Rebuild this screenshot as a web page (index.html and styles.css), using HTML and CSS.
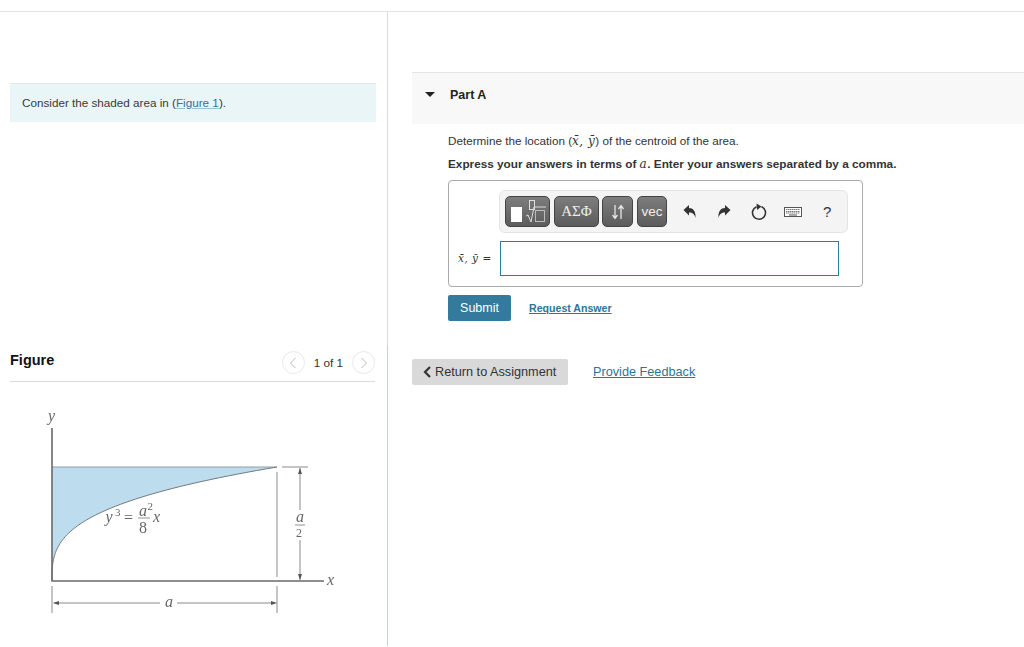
FILE: index.html
```html
<!DOCTYPE html>
<html lang="en">
<head>
<meta charset="utf-8">
<title>Part A</title>
<link rel="stylesheet" href="styles.css">
</head>
<body>
<div class="page">
  <section class="left">
    <div class="intro">Consider the shaded area in (<a href="#" class="figlink">Figure 1</a>).</div>
    <div class="fig-head">
      <h2 class="fig-title">Figure</h2>
      <div class="pager">
        <span class="pager-btn"><svg width="8" height="12" viewBox="0 0 8 12"><path d="M6.5 1 L1.5 6 L6.5 11" fill="none" stroke="#bbb" stroke-width="1"/></svg></span>
        <span class="pager-text">1 of 1</span>
        <span class="pager-btn"><svg width="8" height="12" viewBox="0 0 8 12"><path d="M1.5 1 L6.5 6 L1.5 11" fill="none" stroke="#bbb" stroke-width="1"/></svg></span>
      </div>
    </div>
    <svg class="figure" width="350" height="230" viewBox="0 400 350 230">
      <path d="M52 467 H277 C52 505 52 543 52 581 Z" fill="#bddcee"/>
      <path d="M52 467 H277" stroke="#8f9ea6" stroke-width="1" fill="none"/>
      <path d="M277 467 C52 505 52 543 52 581" stroke="#6f7a80" stroke-width="1" fill="none"/>
      <path d="M52 428 V581 H324" stroke="#6a6a6a" stroke-width="1.6" fill="none"/>
      <path d="M277 472 V577 M282 467 H308 M300 468 V510 M300 540 V580 M52 586 V613 M277 586 V613 M54 603 H160 M177 603 H275" stroke="#8a8a8a" stroke-width="1" fill="none"/>
      <path d="M300 468 l-2 6 h4 Z M300 580 l-2 -6 h4 Z M53 603 l6 -2 v4 Z M277 603 l-6 -2 v4 Z" fill="#555"/>
      <g class="fig-text">
        <text x="48" y="421" class="it big">y</text>
        <text x="327" y="585" class="it big">x</text>
        <text x="165" y="607" class="it big">a</text>
        <text x="105.500" y="522" class="it big">y</text>
        <text x="115" y="516" class="up small">3</text>
        <text x="124" y="523" class="up big">=</text>
        <text x="139" y="516" class="it big">a</text>
        <text x="147.500" y="510" class="up small">2</text>
        <text x="139" y="533" class="up big">8</text>
        <text x="153" y="522" class="it big">x</text>
        <text x="296" y="522" class="it big">a</text>
        <text x="296" y="537" class="up small2">2</text>
      </g>
      <path d="M138 518 H150 M295 525 H305" stroke="#777" stroke-width="0.8"/>
    </svg>
  </section>
  <section class="right">
    <header class="part-head">
      <svg class="caret" width="10" height="5" viewBox="0 0 10 5"><path d="M0 0 H10 L5 5 Z" fill="#222"/></svg>
      <h2 class="part-title">Part A</h2>
    </header>
    <div class="part-body">
      <p class="q">Determine the location (<span class="m">x̄, ȳ</span>) of the centroid of the area.</p>
      <p class="q strong">Express your answers in terms of <span class="m">a</span>. Enter your answers separated by a comma.</p>
      <div class="answer">
        <div class="toolbar">
          <div class="tools-main">
            <span class="tool t1"><svg width="38" height="26" viewBox="0 0 38 26"><rect x="2" y="8" width="11" height="15" fill="#fff"/><rect x="20.500" y="1.500" width="5" height="9" fill="none" stroke="#ddd"/><path d="M17 17 l2 -1 l3 7 l3 -15 h12" fill="none" stroke="#ddd" stroke-width="1"/><rect x="26.500" y="11.500" width="9" height="11" fill="none" stroke="#bbb"/></svg></span>
            <span class="tool t2">ΑΣΦ</span>
            <span class="tool t3"><svg width="16" height="16" viewBox="0 0 16 16"><path d="M5 1 V14 M2.500 11 L5 14.500 L7.500 11 M11 15 V2 M8.500 5 L11 1.500 L13.500 5" fill="none" stroke="#e6e6e6" stroke-width="1.300"/></svg></span>
            <span class="tool t4">vec</span>
          </div>
          <div class="tools-aux">
            <svg class="aux" width="14" height="16" viewBox="0 0 14 16"><path d="M0.500 6 L6 1 V4 C10 4 13 7 12.500 14 C11.500 10 9.500 8.500 6 8.500 V11.500 Z" fill="#333"/></svg>
            <svg class="aux" width="14" height="16" viewBox="0 0 14 16"><path d="M13.500 6 L8 1 V4 C4 4 1 7 1.500 14 C2.500 10 4.500 8.500 8 8.500 V11.500 Z" fill="#333"/></svg>
            <svg class="aux" width="18" height="18" viewBox="0 0 18 18"><path d="M6.500 3.700 A6.500 6.500 0 1 0 11.500 3.700" fill="none" stroke="#333" stroke-width="1.600"/><path d="M6.500 0.500 L11.500 3.500 L7 7 Z" fill="#333"/></svg>
            <svg class="aux" width="18" height="10" viewBox="0 0 18 10"><rect x="0.500" y="0.500" width="17" height="9" fill="#fff" stroke="#555"/><path d="M2 2.500 H16 M2 4.500 H16 M2 6 H16" stroke="#777" stroke-dasharray="1.500 0.500"/><path d="M5 8 H13" stroke="#555"/></svg>
            <span class="help">?</span>
          </div>
        </div>
        <div class="answer-row">
          <label class="ans-label m">x̄, ȳ <span class="eq">=</span></label>
          <div class="ans-input"></div>
        </div>
      </div>
      <div class="actions">
        <button class="submit" type="button">Submit</button>
        <a href="#" class="req">Request Answer</a>
      </div>
    </div>
    <div class="footer-row">
      <button class="back" type="button"><svg width="9" height="12" viewBox="0 0 9 12"><path d="M7 1 L2 6 L7 11" fill="none" stroke="#333" stroke-width="2.200"/></svg>Return to Assignment</button>
      <a href="#" class="feedback">Provide Feedback</a>
    </div>
  </section>
</div>
</body>
</html>
```
FILE: styles.css
```css
* { box-sizing: border-box; }
html, body { margin: 0; padding: 0; background: #fff; }
body { font-family: "Liberation Sans", Arial, sans-serif; color: #333; overflow: hidden; }
.page { margin-top: 11px; border-top: 1px solid #e2e4e8; display: flex; height: 635px; }
.left { width: 388px; flex: none; border-right: 1px solid #d5dae0; border-image: linear-gradient(#d8dce2 0 334px, #c4cfe0 334px) 1; padding: 71px 12px 0 10px; }
.intro { height: 39px; margin-right: -1px; background: #e9f5f7; border-top: 1px solid #dfe8ea; padding-left: 12px; font-size: 11.700px; line-height: 38px; color: #3a3a3a; }
.figlink { color: #2b7696; text-decoration: underline; text-decoration-color: #9cc0d0; }
.fig-head { margin-top: 226px; height: 34px; border-bottom: 1px solid #d8dce0; display: flex; justify-content: space-between; align-items: flex-start; }
.fig-title { margin: 3px 0 0; font-size: 14.500px; line-height: 19px; font-weight: 700; color: #111; }
.pager { display: flex; align-items: center; gap: 9px; margin-top: 3px; }
.pager-btn { width: 23px; height: 23px; border: 1px solid #e8e8e8; border-radius: 50%; display: flex; align-items: center; justify-content: center; }
.pager-text { font-size: 11.700px; color: #333; }
.figure { display: block; margin: 18px 0 0 -10px; filter: blur(0.3px); }
.fig-text { fill: #666; font-family: "Liberation Serif", serif; }
.it { font-style: italic; }
.big { font-size: 16px; }
.small { font-size: 11px; }
.small2 { font-size: 12px; }
.right { flex: 1; min-width: 0; padding: 60px 0 0 24px; }
.part-head { height: 52px; background: #f8f8f8; border-top: 1px solid #e4e4e4; display: flex; align-items: flex-start; padding: 19px 0 0 13px; }
.caret { flex: none; }
.part-title { margin: -5px 0 0 15px; font-size: 12.500px; line-height: 16px; font-weight: 700; color: #222; }
.part-body { padding: 9px 0 0 36px; }
.q { margin: 0; height: 16px; font-size: 11.700px; line-height: 16px; color: #333; }
.strong { margin-top: 7px; font-weight: 700; font-size: 11.780px; color: #333; }
.m { font-family: "DejaVu Serif", serif; font-style: italic; font-weight: 400; font-size: 12px; line-height: 1; letter-spacing: 0.5px; }
.answer { margin-top: 8px; width: 415px; height: 107px; border: 1px solid #aaa; border-radius: 4px; padding: 9px 0 0 50px; }
.toolbar { width: 349px; height: 43px; background: #f4f4f4; border: 1px solid #e5e5e5; border-radius: 6px; display: flex; align-items: flex-start; padding: 5px 0 0 5px; }
.tools-main { display: flex; gap: 4px; }
.tool { height: 31px; display: flex; align-items: center; justify-content: center; border: 1px solid #444; border-radius: 5px; background: linear-gradient(#7d7d7d, #5c5c5c); color: #eee; }
.t1 { width: 45px; }
.t2 { width: 45px; font-family: "Liberation Serif", serif; font-size: 15px; }
.t3 { width: 31px; margin-left: -1px; }
.t4 { width: 30px; font-size: 13.500px; }
.tools-aux { display: flex; align-items: center; height: 31px; margin-left: 16px; gap: 0; }
.aux { flex: none; margin-right: 20px; }
.aux:nth-child(2) { margin-right: 19px; }
.aux:nth-child(3) { margin-right: 16px; }
.aux:nth-child(4) { margin-right: 21px; }
.help { font-size: 15px; color: #333; }
.answer-row { display: flex; align-items: center; margin-top: 8px; }
.ans-label { width: 42px; margin-left: -41px; flex: none; font-size: 10.500px; color: #333; white-space: nowrap; }
.eq { font-style: normal; }
.ans-input { width: 339px; height: 35px; border: 1px solid #2f7d9e; background: #fff; }
.actions { display: flex; align-items: center; margin-top: 8px; }
.submit { width: 63px; height: 26px; border: 0; border-radius: 2px; background: #347a9c; color: #fff; font: 12.500px "Liberation Sans", Arial, sans-serif; padding: 0; }
.req { margin-left: 18px; font-size: 10.600px; font-weight: 700; color: #2b7696; }
.footer-row { display: flex; align-items: center; margin-top: 38px; }
.back { width: 156px; height: 26px; border: 0; border-radius: 2px; background: #d9d9d9; color: #333; font: 12.700px "Liberation Sans", Arial, sans-serif; padding: 0 0 0 11px; display: flex; align-items: center; gap: 3px; }
.feedback { margin-left: 25px; font-size: 12.700px; color: #2b7696; }
```
